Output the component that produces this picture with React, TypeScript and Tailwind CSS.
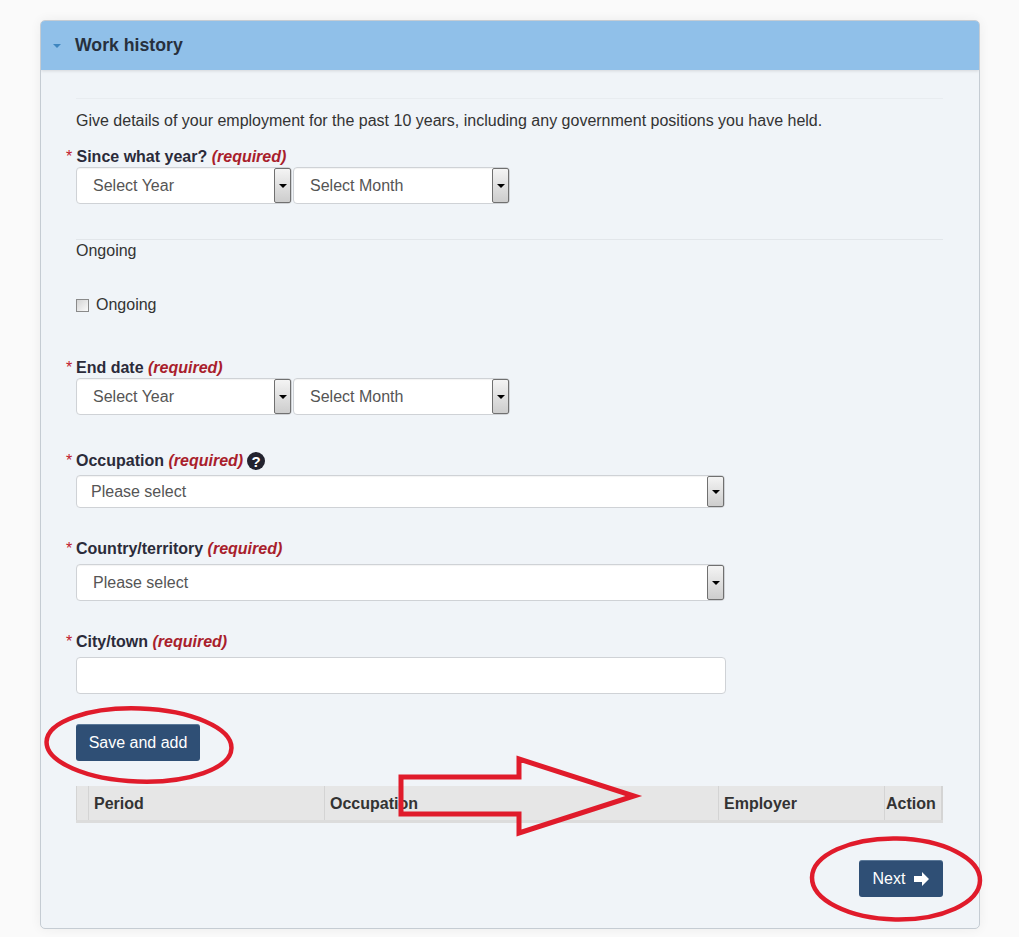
import type { ReactNode } from "react";

const font = "font-['Liberation_Sans',Arial,sans-serif]";

function Required() {
  return <em className="font-bold text-[#a91e2c]">(required)</em>;
}

function FieldLabel({ text, className = "", children }: { text: string; className?: string; children?: ReactNode }) {
  return (
    <div className={`relative h-[20px] text-[16px] leading-[20px] font-bold text-[#2b2b3a] ${className}`}>
      <span className="absolute left-[-10px] top-0 font-normal text-[#c0202c]">*</span>
      {text} <Required />
      {children}
    </div>
  );
}

function SelectBox({ label, className = "", pad = "pl-[16px]" }: { label: string; className?: string; pad?: string }) {
  return (
    <div className={`flex items-center justify-between bg-white border border-[#cfd2d6] rounded-[4px] shadow-[inset_0_1px_1px_rgba(0,0,0,0.05)] ${pad} ${className}`}>
      <span className="text-[16px] text-[#555]">{label}</span>
      <span className="flex h-full w-[17px] shrink-0 items-center justify-center rounded-[2px] border border-[#707070] bg-gradient-to-b from-[#f4f4f4] to-[#cdcdcd]">
        <span className="h-0 w-0 border-x-[4px] border-t-[4px] border-x-transparent border-t-black" />
      </span>
    </div>
  );
}

function DatePair({ className = "" }: { className?: string }) {
  return (
    <div className={`flex gap-px ${className}`}>
      <SelectBox label="Select Year" className="w-[216px] h-[37px]" />
      <SelectBox label="Select Month" className="w-[217px] h-[37px]" />
    </div>
  );
}

function HeadCell({ label, className = "" }: { label: string; className?: string }) {
  return (
    <div className={`flex items-center border-r border-[#d4d4d4] pt-[2px] text-[16px] font-bold text-[#333] ${className}`}>
      {label}
    </div>
  );
}

function Annotations() {
  return (
    <svg className="pointer-events-none absolute left-0 top-0" width="1019" height="937" fill="none" stroke="#e01b2b">
      <ellipse cx="139" cy="745" rx="92.5" ry="36.5" strokeWidth="4.5" transform="rotate(2 139 745)" />
      <ellipse cx="896" cy="879" rx="84" ry="40.5" strokeWidth="4.5" transform="rotate(1 896 879)" />
      <path d="M401 777 H519 V759 L634 796 L519 833 V814 H401 Z" strokeWidth="5" strokeLinejoin="miter" />
    </svg>
  );
}

export default function App() {
  return (
    <div className={`relative h-[937px] w-[1019px] overflow-hidden bg-[#fafafa] pt-[20px] pl-[40px] ${font}`}>
      <div className="h-[909px] w-[940px] overflow-hidden rounded-[5px] border border-[#c5ccd3] bg-[#f0f4f8] shadow-[0_0_12px_rgba(0,0,0,0.06)]">
        <div className="flex h-[49px] items-center bg-[#90c0e9] shadow-[0_1px_3px_rgba(0,0,0,0.12)]">
          <span className="ml-[12px] h-0 w-0 border-x-[4px] border-t-[4px] border-x-transparent border-t-[#3f86bf]" />
          <h2 className="ml-[14px] text-[17.7px] font-bold text-[#27303d]">Work history</h2>
        </div>

        <div className="pl-[35px] pr-[36px]">
          <div className="mt-[28px] border-t border-[#e8ecf0] pt-[12px] text-[16px] leading-[20px] text-[#333]">
            Give details of your employment for the past 10 years, including any government positions you have held.
          </div>

          <FieldLabel text="Since what year?" className="mt-[16px] pl-[0.5px]" />
          <DatePair />

          <div className="mt-[35px] border-t border-[#e2e6ea] pt-[1px] text-[16px] leading-[20px] text-[#333]">Ongoing</div>

          <div className="mt-[34px] flex h-[20px] items-center text-[16px] text-[#333]">
            <span className="h-[13px] w-[13px] border border-[#8a8a8a] bg-gradient-to-br from-[#d4d4d4] to-[#fafafa]" />
            <span className="ml-[7px]">Ongoing</span>
          </div>

          <FieldLabel text="End date" className="mt-[43px]" />
          <DatePair />

          <FieldLabel text="Occupation" className="mt-[36px]">
            <span className="absolute left-[171px] top-px flex h-[18px] w-[18px] items-center justify-center rounded-full bg-[#23232f] text-[15px] leading-none text-white">
              ?
            </span>
          </FieldLabel>
          <SelectBox label="Please select" pad="pl-[14px]" className="mt-[4px] h-[33px] w-[649px]" />

          <FieldLabel text="Country/territory" className="mt-[31px]" />
          <SelectBox label="Please select" className="mt-[5px] h-[37px] w-[649px]" />

          <FieldLabel text="City/town" className="mt-[31px]" />
          <div className="mt-[5px] h-[37px] w-[650px] rounded-[4px] border border-[#cfd2d6] bg-white" />

          <button className="mt-[30px] flex h-[37px] w-[124px] items-center justify-center rounded-[3px] border-t border-[#5a7898] bg-[#2f4f75] text-[16px] text-white">
            Save and add
          </button>

          <div className="mt-[25px] flex h-[37px] w-[867px] border-b-[3px] border-[#dcdcdc] bg-[#e6e6e6]">
            <div className="w-[13px] border-x border-[#d4d4d4]" />
            <HeadCell label="Period" className="w-[236px] pl-[5px]" />
            <HeadCell label="Occupation" className="w-[394px] pl-[5px]" />
            <HeadCell label="Employer" className="w-[166px] pl-[5px]" />
            <HeadCell label="Action" className="w-[58px] border-r-2 pl-px" />
          </div>

          <div className="mt-[37px] flex justify-end">
            <button className="flex h-[37px] w-[84px] items-center justify-center gap-[9px] rounded-[3px] border-t border-[#5a7898] bg-[#2f4f75] text-[16px] text-white">
              Next
              <svg width="15" height="14" viewBox="0 0 15 14" fill="white">
                <path d="M0 4 H8 V0 L15 7 L8 14 V10 H0 Z" />
              </svg>
            </button>
          </div>
        </div>
      </div>
      <Annotations />
    </div>
  );
}
